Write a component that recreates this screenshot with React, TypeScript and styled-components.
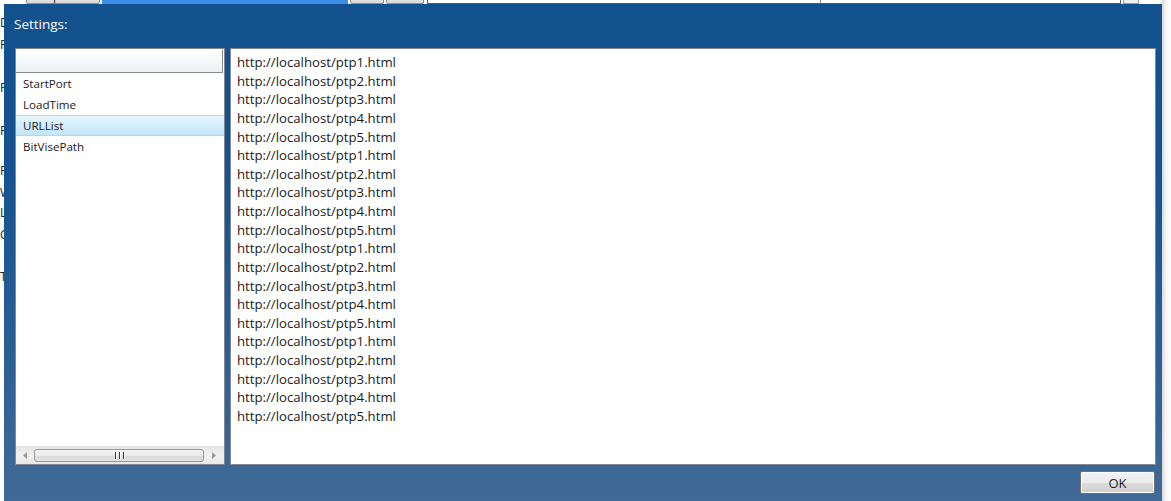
import React from "react";
import styled, { createGlobalStyle } from "styled-components";

const Global = createGlobalStyle`
  html, body { margin: 0; padding: 0; }
  body {
    width: 1171px;
    height: 501px;
    overflow: hidden;
    background: #ffffff;
    font-family: "Open Sans", "Noto Sans", sans-serif;
  }
`;

const Page = styled.div`
  position: relative;
  width: 1171px;
  height: 501px;
  overflow: hidden;
  background: #ffffff;
`;

/* ---------- background application (mostly hidden) ---------- */
const BgToolbar = styled.div`
  display: flex;
  align-items: flex-end;
  height: 4px;
  overflow: hidden;
  gap: 2px;
`;

const BgLabel = styled.div`
  width: 24px;
  height: 20px;
  overflow: hidden;
  font-size: 12px;
  line-height: 24px;
  color: #222;
  white-space: nowrap;
`;

const BgButton = styled.div<{ $w: number }>`
  width: ${(p) => p.$w}px;
  height: 20px;
  box-sizing: border-box;
  border: 1px solid #8a8a8a;
  border-radius: 2px;
  background: linear-gradient(#f2f2f2, #dcdcdc);
  font-size: 12px;
  line-height: 22px;
  text-align: center;
  color: #222;
`;

const BgSelected = styled.div`
  width: 246px;
  height: 20px;
  background: #3a8ee8;
`;

const BgTextBox = styled.div`
  width: 694px;
  height: 20px;
  box-sizing: border-box;
  border: 1px solid #5a5a5a;
  border-top: none;
  background: #fff;
  display: flex;
  margin-left: 1px;
`;

const BgTextCol = styled.div<{ $w: number }>`
  width: ${(p) => p.$w}px;
  height: 100%;
  border-right: 1px solid #8a8a8a;
`;

const BgScroll = styled.div`
  width: 14px;
  height: 20px;
  border: 1px solid #9a9a9a;
  background: #f0f0f0;
`;

const BgRightEdge = styled.div`
  position: absolute;
  top: 0;
  right: 0;
  width: 9px;
  height: 501px;
  background: linear-gradient(90deg, #d6d6d6, #f4f4f4 40%, #ffffff);
`;

const BgSide = styled.div`
  display: flex;
  flex-direction: column;
  width: 4px;
  overflow: hidden;
`;

const BgSideLabel = styled.div<{ $mt: number }>`
  margin-top: ${(p) => p.$mt}px;
  width: 4px;
  overflow: hidden;
  font-size: 12px;
  line-height: 14px;
  height: 14px;
  color: #222;
  white-space: nowrap;
`;

/* ---------- dialog overlay ---------- */
const Dialog = styled.div`
  position: absolute;
  left: 4px;
  top: 4px;
  width: 1158px;
  height: 497px;
  display: flex;
  flex-direction: column;
  background: linear-gradient(#12508e 0%, #165390 35%, #2b5f93 70%, #406a96 100%);
  box-sizing: border-box;
`;

const Title = styled.div`
  height: 44px;
  box-sizing: border-box;
  padding: 10px 0 0 10px;
  font-size: 13.5px;
  line-height: 20px;
  color: #ffffff;
`;

const Body = styled.div`
  display: flex;
  gap: 5px;
  height: 417px;
  padding: 0 6px 0 11px;
`;

const ListPanel = styled.div`
  width: 210px;
  box-sizing: border-box;
  border: 1px solid #828790;
  background: #ffffff;
  display: flex;
  flex-direction: column;
`;

const ListHeader = styled.div`
  height: 24px;
  flex: none;
  display: flex;
  background: #ffffff;
`;

const HeaderCell = styled.div`
  width: 207px;
  box-sizing: border-box;
  border-right: 1px solid #8b8b8b;
  border-bottom: 1px solid #8b8b8b;
  border-top: 1px solid #ffffff;
  background: linear-gradient(#ffffff 0%, #f7f8f9 45%, #eceef0 100%);
`;

const Items = styled.div`
  flex: 1;
  display: flex;
  flex-direction: column;
`;

const Item = styled.div<{ $selected?: boolean }>`
  height: 21px;
  box-sizing: border-box;
  padding-left: 7px;
  font-size: 11.6px;
  line-height: 19px;
  color: #1a1a1a;
  border: 1px solid ${(p) => (p.$selected ? "#a9d9f6" : "transparent")};
  border-left: none;
  border-right: none;
  background: ${(p) =>
    p.$selected ? "linear-gradient(#e9f6fd 0%, #d3eefb 50%, #c1e6fa 100%)" : "transparent"};
`;

const HScroll = styled.div`
  height: 17px;
  flex: none;
  display: flex;
  align-items: center;
  background: linear-gradient(#e6e6e6, #f2f2f2 50%, #e8e8e8);
  border-top: 1px solid #e2e2e2;
  padding: 0 4px 0 2px;
  gap: 3px;
`;

const Arrow = styled.div`
  width: 13px;
  display: flex;
  align-items: center;
  justify-content: center;
`;

const Thumb = styled.div`
  flex: 1;
  height: 13px;
  box-sizing: border-box;
  border: 1px solid #979797;
  border-radius: 3px;
  background: linear-gradient(#f6f6f6, #e9e9e9 50%, #d9d9d9 51%, #e2e2e2);
  display: flex;
  align-items: center;
  justify-content: center;
  gap: 1px;
`;

const Grip = styled.div`
  width: 1px;
  height: 7px;
  background: #3a3a3a;
  box-shadow: 1px 0 0 #ffffff;
  margin: 0 1px;
`;

const TextPanel = styled.div`
  flex: 1;
  box-sizing: border-box;
  border: 1px solid #828790;
  background: #ffffff;
  padding: 4px 6px;
  font-size: 13.2px;
  line-height: 18.63px;
  color: #1a1a1a;
`;

const Line = styled.div`
  white-space: nowrap;
`;

const Footer = styled.div`
  display: flex;
  justify-content: flex-end;
  padding: 6px 7px 0 0;
`;

const OkButton = styled.button`
  width: 75px;
  height: 23px;
  box-sizing: border-box;
  border: 1px solid #707070;
  border-radius: 2px;
  background: linear-gradient(#f3f3f3 0%, #ebebeb 50%, #dddddd 51%, #cfcfcf 100%);
  box-shadow: inset 0 0 0 1px #fcfcfc;
  font-family: "Open Sans", "Noto Sans", sans-serif;
  font-size: 13px;
  color: #1a1a1a;
  padding: 0;
`;

const urls = Array.from({ length: 20 }, (_, i) => `http://localhost/ptp${(i % 5) + 1}.html`);
const items = ["StartPort", "LoadTime", "URLList", "BitVisePath"];

const sideLabels: [string, number][] = [
  ["Duration", 12],
  ["Runs", 8],
  ["Port", 29],
  ["Port", 29],
  ["Profile", 26],
  ["Wait", 8],
  ["Log", 6],
  ["Cmd", 8],
  ["Test", 28],
];

export default function App() {
  return (
    <Page>
      <Global />
      <BgToolbar>
        <BgLabel>DESN</BgLabel>
        <BgButton $w={74}>Option</BgButton>
        <BgSelected />
        <BgButton $w={34}>All</BgButton>
        <BgButton $w={38}>None</BgButton>
        <BgTextBox>
          <BgTextCol $w={392} />
        </BgTextBox>
        <BgScroll />
      </BgToolbar>
      <BgSide>
        {sideLabels.map(([t, m], i) => (
          <BgSideLabel key={i} $mt={m}>
            {t}
          </BgSideLabel>
        ))}
      </BgSide>
      <BgRightEdge />

      <Dialog>
        <Title>Settings:</Title>
        <Body>
          <ListPanel>
            <ListHeader>
              <HeaderCell />
            </ListHeader>
            <Items>
              {items.map((it) => (
                <Item key={it} $selected={it === "URLList"}>
                  {it}
                </Item>
              ))}
            </Items>
            <HScroll>
              <Arrow>
                <svg width="4" height="7" viewBox="0 0 4 7">
                  <path d="M4 0 L0 3.5 L4 7 Z" fill="#9a9a9a" />
                </svg>
              </Arrow>
              <Thumb>
                <Grip />
                <Grip />
                <Grip />
              </Thumb>
              <Arrow>
                <svg width="4" height="7" viewBox="0 0 4 7">
                  <path d="M0 0 L4 3.5 L0 7 Z" fill="#9a9a9a" />
                </svg>
              </Arrow>
            </HScroll>
          </ListPanel>
          <TextPanel>
            {urls.map((u, i) => (
              <Line key={i}>{u}</Line>
            ))}
          </TextPanel>
        </Body>
        <Footer>
          <OkButton>OK</OkButton>
        </Footer>
      </Dialog>
    </Page>
  );
}
